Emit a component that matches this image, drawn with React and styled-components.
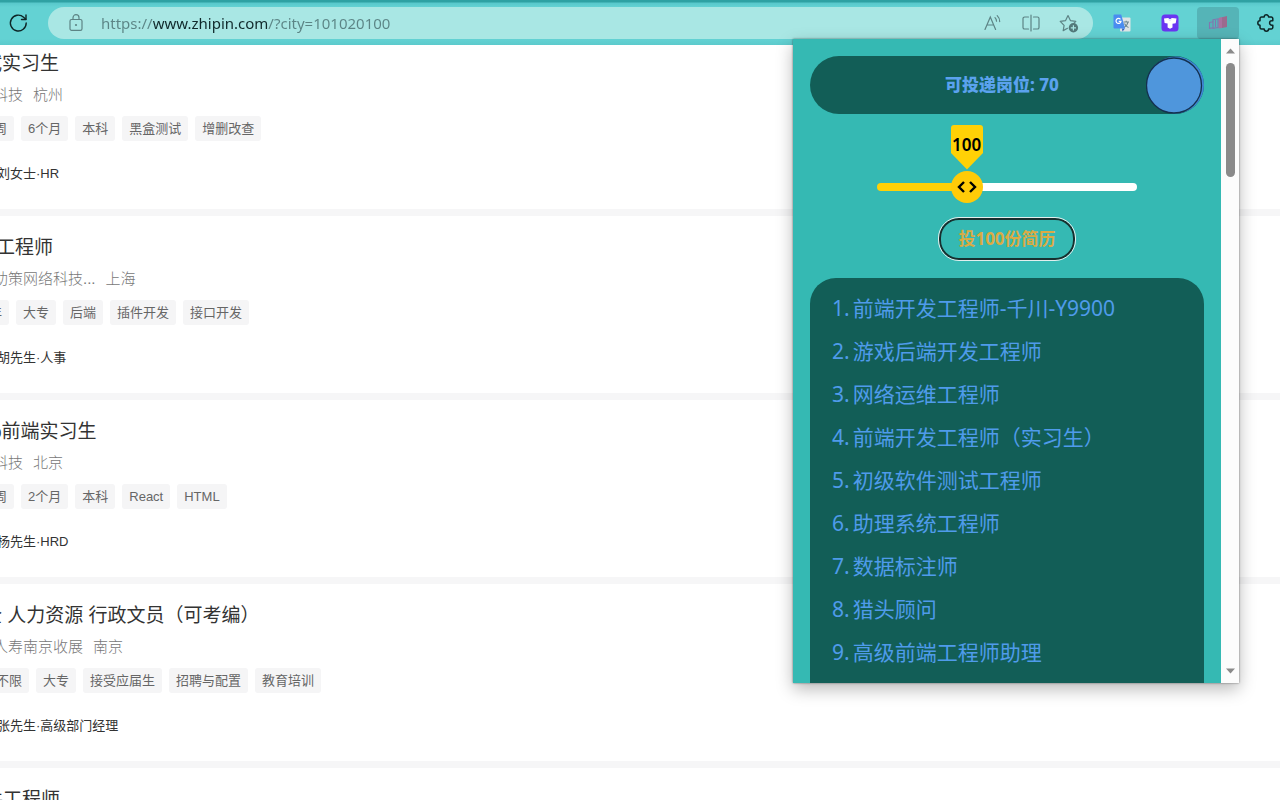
import React, {useState} from 'react'
import styled, {createGlobalStyle} from 'styled-components'

const GlobalStyle = createGlobalStyle`
  * {
    box-sizing: border-box;
  }
  body {
    margin: 0;
    background: #fff;
    font-family: "Liberation Sans", "Noto Sans CJK SC", sans-serif;
    overflow: hidden;
  }
  button {
    font: inherit;
    padding: 0;
    border: none;
    background: transparent;
    cursor: pointer;
  }
`;

const Page = styled.div`
  position: relative;
  height: 100vh;
  overflow: hidden;
`;

const Toolbar = styled.header`
  position: relative;
  z-index: 1;
  display: flex;
  align-items: center;
  height: 45px;
  background: linear-gradient(#2fa1a3 2px, #58c8cb 3px, #63d2d3 7px, #63d2d3 39px, #5ccacc);
`;

const ToolButton = styled.button`
  display: flex;
  align-items: center;
  justify-content: center;
  width: ${props => props.$width}px;
  height: 32px;
  border-radius: 4px;
  background: ${props => props.$active ? "#55b4b7" : "transparent"};
`;

const AddressBar = styled.div`
  flex: 1;
  display: flex;
  align-items: center;
  height: 32px;
  margin-left: 12px;
  padding: 0 5px 0 20px;
  border-radius: 16px;
  background: #a9e7e4;
`;

/* scheme and path are dimmed, the host between them is dark */
const Address = styled.input`
  flex: 1;
  min-width: 0;
  margin-left: 17px;
  padding: 0;
  border: none;
  outline: none;
  font-family: "Noto Sans", "Noto Sans CJK SC", sans-serif;
  font-size: 15px;
  line-height: 24px;
  color: #17383a;
  background: linear-gradient(to right, #5b8485 52px, #10292b 52px, #10292b 167px, #5b8485 167px);
  -webkit-background-clip: text;
  background-clip: text;
  -webkit-text-fill-color: transparent;
`;

const Extensions = styled.nav`
  display: flex;
  gap: 6px;
  margin-left: 8px;
  margin-right: -7px;
`;

const JobList = styled.main`
  margin-top: -13px;
`;

const JobCard = styled.article`
  padding: 20px 0 25px;
  border-bottom: 7px solid #f6f6f7;
  white-space: nowrap;
`;

const JobTitle = styled.h2`
  margin: 0 0 9px;
  margin-left: -${props => props.$scrolled}px;
  font-size: 19px;
  font-weight: 400;
  line-height: 24px;
  color: #333;
`;

const Company = styled.div`
  display: flex;
  gap: 10px;
  margin-left: -7px;
  font-size: 15px;
  font-weight: 300;
  line-height: 20px;
  color: #777;
`;

const Tags = styled.ul`
  display: flex;
  gap: 7px;
  margin: 11px 0 23px;
  margin-left: -${props => props.$scrolled}px;
  padding: 0;
  list-style: none;
`;

const Tag = styled.li`
  padding: 0 7px;
  border-radius: 3px;
  background: #f5f5f6;
  font-size: 13px;
  line-height: 25px;
  color: #666;
`;

const Recruiter = styled.div`
  margin-left: -3px;
  font-size: 13px;
  line-height: 20px;
  color: #333;
`;

const Popup = styled.aside`
  position: absolute;
  z-index: 2;
  top: 39px;
  right: 41px;
  display: flex;
  width: 446px;
  height: 644px;
  background: #35b9b3;
  box-shadow: 0 0 2px rgba(0,0,0,0.5), 0 6px 16px rgba(0,0,0,0.28);
  font-family: "Noto Sans", "Noto Sans CJK SC", sans-serif;
`;

const PopupBody = styled.div`
  flex: 1;
  display: flex;
  flex-direction: column;
  align-items: center;
  padding: 17px 17px 0;
  overflow: hidden;
`;

const Status = styled.div`
  display: flex;
  align-items: center;
  width: 100%;
  height: 58px;
  flex-shrink: 0;
  border-radius: 29px;
  background: #125e57;
`;

const StatusText = styled.strong`
  flex: 1;
  padding-left: 48px;
  text-align: center;
  font-size: 17px;
  font-weight: 800;
  line-height: 24px;
  color: #5ba2ee;
`;

const Knob = styled.button`
  width: 58px;
  height: 58px;
  border-radius: 50%;
`;

const Slider = styled.div`
  position: relative;
  width: 260px;
  height: 80px;
  margin-top: 11px;
  padding-top: 46px;
  flex-shrink: 0;
`;

const Range = styled.input`
  display: block;
  appearance: none;
  width: 100%;
  height: 32px;
  margin: 0;
  background: transparent;
  outline: none;
  &::-webkit-slider-runnable-track {
    height: 8px;
    border-radius: 4px;
    background: linear-gradient(to right, #ffd106 ${props => props.$fill}%, #fff ${props => props.$fill}%);
  }
  &::-webkit-slider-thumb {
    appearance: none;
    width: 32px;
    height: 32px;
    margin-top: -12px;
    border-radius: 50%;
    background: #ffcb08;
  }
`;

const Pointer = styled.div`
  position: absolute;
  top: 0;
  width: 34px;
  height: 78px;
  margin-left: -17px;
  pointer-events: none;
  & > svg {
    position: absolute;
    top: 0;
    left: 0;
  }
`;

const Bubble = styled.output`
  position: relative;
  display: block;
  text-align: center;
  font-size: 17px;
  font-weight: 600;
  line-height: 40px;
  color: #000;
`;

const SendButton = styled.button`
  flex-shrink: 0;
  margin-top: 13px;
  padding: 0 17px;
  border: 2px solid #17302f;
  border-radius: 20px;
  outline: 1px solid #e3efee;
  font-size: 17px;
  font-weight: 700;
  line-height: 38px;
  color: #dbab43;
`;

const Positions = styled.ol`
  flex: 1 0 auto;
  width: 100%;
  margin: 18px 0 0;
  padding: 9px 22px;
  border-radius: 26px 26px 0 0;
  background: #125e57;
  list-style: none;
`;

const Position = styled.li`
  display: flex;
  gap: 3px;
  font-size: 21px;
  line-height: 43px;
  color: #4f9bea;
  white-space: nowrap;
`;

const Scrollbar = styled.div`
  display: flex;
  flex-direction: column;
  align-items: center;
  justify-content: space-between;
  width: 18px;
  padding: 9px 0;
  background: #fcfcfc;
`;

const ScrollThumb = styled.div`
  width: 9px;
  height: 114px;
  margin: 9px 0 auto;
  border-radius: 5px;
  background: #8a8a8a;
`;

const jobs = [
	{
		title : "试实习生",
		titleCut : 17,
		company : "科技",
		city : "杭州",
		tags : ["周","6个月","本科","黑盒测试","增删改查"],
		tagsCut : 13,
		recruiter : "刘女士·HR"
	},
	{
		title : "工程师",
		titleCut : 4,
		company : "助策网络科技...",
		city : "上海",
		tags : ["年","大专","后端","插件开发","接口开发"],
		tagsCut : 18,
		recruiter : "胡先生·人事"
	},
	{
		title : "b前端实习生",
		titleCut : 9,
		company : "科技",
		city : "北京",
		tags : ["周","2个月","本科","React","HTML"],
		tagsCut : 13,
		recruiter : "杨先生·HRD"
	},
	{
		title : "企 人力资源 行政文员（可考编）",
		titleCut : 17,
		company : "人寿南京收展",
		city : "南京",
		tags : ["不限","大专","接受应届生","招聘与配置","教育培训"],
		tagsCut : 11,
		recruiter : "张先生·高级部门经理"
	},
	{
		title : "件工程师",
		titleCut : 16,
		tags : []
	},
]

const positions = [
	"前端开发工程师-千川-Y9900",
	"游戏后端开发工程师",
	"网络运维工程师",
	"前端开发工程师（实习生）",
	"初级软件测试工程师",
	"助理系统工程师",
	"数据标注师",
	"猎头顾问",
	"高级前端工程师助理",
]

const MAX = 310

const ReloadIcon = () => (
	<svg width="20" height="20" viewBox="0 0 20 20" fill="none" stroke="#0d2526" strokeWidth="1.4" strokeLinecap="round" strokeLinejoin="round">
		<path d="M18.200 10a7.900 7.900 0 1 1-2.600-5.800L17.800 6.300" /><path d="M18 2v4.500h-4.500" />
	</svg>
)

const LockIcon = () => (
	<svg width="16" height="18" viewBox="0 0 16 18" fill="none" stroke="#5d8485" strokeWidth="1.2">
		<rect x="2" y="5.5" width="12" height="10.8" rx="1.6" />
		<path d="M5 5.5V3.700a3 3 0 0 1 6 0v1.800" />
		<circle cx="8" cy="11" r="1.100" fill="#5d8485" stroke="none" />
	</svg>
)

const ReadAloudIcon = () => (
	<svg width="18" height="18" viewBox="0 0 18 18" fill="none" stroke="#5d8485" strokeWidth="1.2" strokeLinecap="round">
		<path d="M1 15.500 6.300 3 11.600 15.500M2.900 11h6.800" />
		<path d="M11 3.600a5 5 0 0 1 1.500 3.600M13.200 1.600a8 8 0 0 1 2.500 6" />
	</svg>
)

const SplitIcon = () => (
	<svg width="18" height="18" viewBox="0 0 18 18" fill="none" stroke="#5d8485" strokeWidth="1.2" strokeLinecap="round">
		<path d="M9 1v16M6.5 3H2.6A1.6 1.6 0 0 0 1 4.600v8.800A1.600 1.600 0 0 0 2.600 15h3.900M11.500 3h3.900A1.600 1.600 0 0 1 17 4.600v8.800a1.600 1.600 0 0 1-1.600 1.600h-3.900" />
	</svg>
)

const StarIcon = () => (
	<svg width="20" height="20" viewBox="0 0 20 20" fill="none">
		<path d="M8.500 15.300 4.200 17.600l.9-5.300L1.200 8.400l5.400-.8L9 2.600l2.400 5 5.400.8-2 2" stroke="#5d8485" strokeWidth="1.2" strokeLinejoin="round" strokeLinecap="round" />
		<circle cx="14.400" cy="14.800" r="4.700" fill="#53797a" />
		<path d="M14.400 12.200v5.200M11.800 14.800h5.200" stroke="#a9e7e4" strokeWidth="1.200" />
	</svg>
)

const TranslateIcon = () => (
	<svg width="18" height="18" viewBox="0 0 18 18">
		<rect x="7" y="3.500" width="10.500" height="14" rx="1" fill="#dfe5e6" />
		<path d="M10.500 8h5.500M13.200 6.800V8M15 8c-.5 2.500-2 4.500-4 5.500M11.500 9.500c.8 2 2.200 3.300 4 4" stroke="#6d8790" strokeWidth="1.100" fill="none" />
		<path d="m9 14.500 3 0-2.500 3z" fill="#3160bd" />
		<path d="M1.500.5h6.700l3.900 14H1.500a1 1 0 0 1-1-1v-12a1 1 0 0 1 1-1z" fill="#4a8cf0" />
		<path d="M7.500 5.400A2.500 2.500 0 1 0 8 7.400H5.700" stroke="#fff" strokeWidth="1.200" fill="none" />
	</svg>
)

const PurpleIcon = () => (
	<svg width="18" height="18" viewBox="0 0 18 18">
		<rect x=".5" y=".5" width="17" height="17" rx="3.500" fill="#6a35f2" />
		<path d="M3 4.500 7 4l2 1.200L11 4l4.500.5-.8 4.700-3.200.6V13.500L9 14.700l-2.400-1.200v-4L3.600 9z" fill="#fff" />
		<path d="m7 4.200 2 2.600 2-2.600" fill="none" stroke="#e0d2ff" strokeWidth=".8" />
	</svg>
)

const BlocksIcon = () => (
	<svg width="20" height="16" viewBox="0 0 20 16" fill="none">
		<path d="m10.500 3 3.500-1v11l-3.500.5z" fill="#a8729f" />
		<path d="m14 2.200 5-1.200v11l-5 1z" fill="#9c6a8e" />
		<path d="M1.500 7.500 5 6.800v6l-3.500.6zM5 4.800l5-1v8.800l-5 .8z" stroke="#8277b0" strokeWidth="1.100" />
		<path d="M7.500 5v7" stroke="#8277b0" />
	</svg>
)

const PuzzleIcon = () => (
	<svg width="18" height="20" viewBox="0 0 18 20" fill="none" stroke="#0d2526" strokeWidth="1.500" strokeLinejoin="round">
		<path d="M4.500 4h2.700a2.200 2.200 0 0 1 4.400 0h2.700a1.500 1.500 0 0 1 1.500 1.500v2.300h-1a2.200 2.200 0 0 0 0 4.400h1v2.300a1.500 1.500 0 0 1-1.500 1.500h-2.700a2.200 2.200 0 0 1-4.400 0H4.500A1.500 1.500 0 0 1 3 14.500v-2.300a2.200 2.200 0 0 1 0-4.400V5.500A1.500 1.500 0 0 1 4.500 4z" />
	</svg>
)

const App = () => {
	const [count,setCount] = useState(100)
	const [on,setOn] = useState(true)

	const ratio = count / MAX

	return(
		<Page>
			<GlobalStyle />
			<Toolbar>
				<ToolButton $width={36} aria-label="刷新"><ReloadIcon /></ToolButton>
				<AddressBar>
					<LockIcon />
					<Address aria-label="地址" defaultValue="https://www.zhipin.com/?city=101020100" />
					<ToolButton $width={38} aria-label="朗读"><ReadAloudIcon /></ToolButton>
					<ToolButton $width={38} aria-label="分屏"><SplitIcon /></ToolButton>
					<ToolButton $width={38} aria-label="收藏"><StarIcon /></ToolButton>
				</AddressBar>
				<Extensions>
					<ToolButton $width={42} aria-label="翻译"><TranslateIcon /></ToolButton>
					<ToolButton $width={42} aria-label="主题"><PurpleIcon /></ToolButton>
					<ToolButton $width={42} $active aria-label="投递简历"><BlocksIcon /></ToolButton>
					<ToolButton $width={42} aria-label="扩展"><PuzzleIcon /></ToolButton>
				</Extensions>
			</Toolbar>
			<JobList>
				{
					jobs.map( (job,index) => {
						return(
							<JobCard key={index}>
								<JobTitle $scrolled={job.titleCut}>{job.title}</JobTitle>
								<Company>
									<span>{job.company}</span>
									<span>{job.city}</span>
								</Company>
								<Tags $scrolled={job.tagsCut}>
									{job.tags.map( tag => <Tag key={tag}>{tag}</Tag> )}
								</Tags>
								<Recruiter>{job.recruiter}</Recruiter>
							</JobCard>
						)
					})
				}
			</JobList>
			<Popup>
				<PopupBody>
					<Status>
						<StatusText>可投递岗位: 70</StatusText>
						<Knob role="switch" aria-checked={on} aria-label="开关" onClick={() => setOn(!on)}>
							<svg width="58" height="58" viewBox="0 0 58 58">
								<circle cx="29.500" cy="29" r="28.500" fill="#3f86d6" />
								<circle cx="28" cy="29.500" r="27.500" fill={on ? "#4f96dc" : "#8aa"} stroke="#14304f" strokeWidth="1.300" />
							</svg>
						</Knob>
					</Status>
					<Slider>
						<Range
							type="range"
							min="0"
							max={MAX}
							value={count}
							$fill={ratio * 100}
							aria-label="简历份数"
							onChange={(event) => setCount(Number(event.target.value))}
						/>
						<Pointer style={{left: `calc(16px + (100% - 32px) * ${ratio})`}}>
							<svg width="34" height="78" viewBox="0 0 34 78">
								<path d="M4 0h26a3 3 0 0 1 3 3v25L17 44.500 1 28V3a3 3 0 0 1 3-3z" fill="#ffd106" />
								<path d="m14 57-5 5 5 5M20 57l5 5-5 5" fill="none" stroke="#000" strokeWidth="2.400" />
							</svg>
							<Bubble>{count}</Bubble>
						</Pointer>
					</Slider>
					<SendButton>投{count}份简历</SendButton>
					<Positions>
						{
							positions.map( (name,index) => {
								return(
									<Position key={index}>
										<span>{index + 1}.</span>
										<span>{name}</span>
									</Position>
								)
							})
						}
					</Positions>
				</PopupBody>
				<Scrollbar>
					<svg width="9" height="6" viewBox="0 0 9 6"><path d="M0 5.500 4.500.500 9 5.500z" fill="#8a8a8a" /></svg>
					<ScrollThumb />
					<svg width="9" height="6" viewBox="0 0 9 6"><path d="M0 .500 4.500 5.500 9 .500z" fill="#8a8a8a" /></svg>
				</Scrollbar>
			</Popup>
		</Page>
	)
}

export default App
